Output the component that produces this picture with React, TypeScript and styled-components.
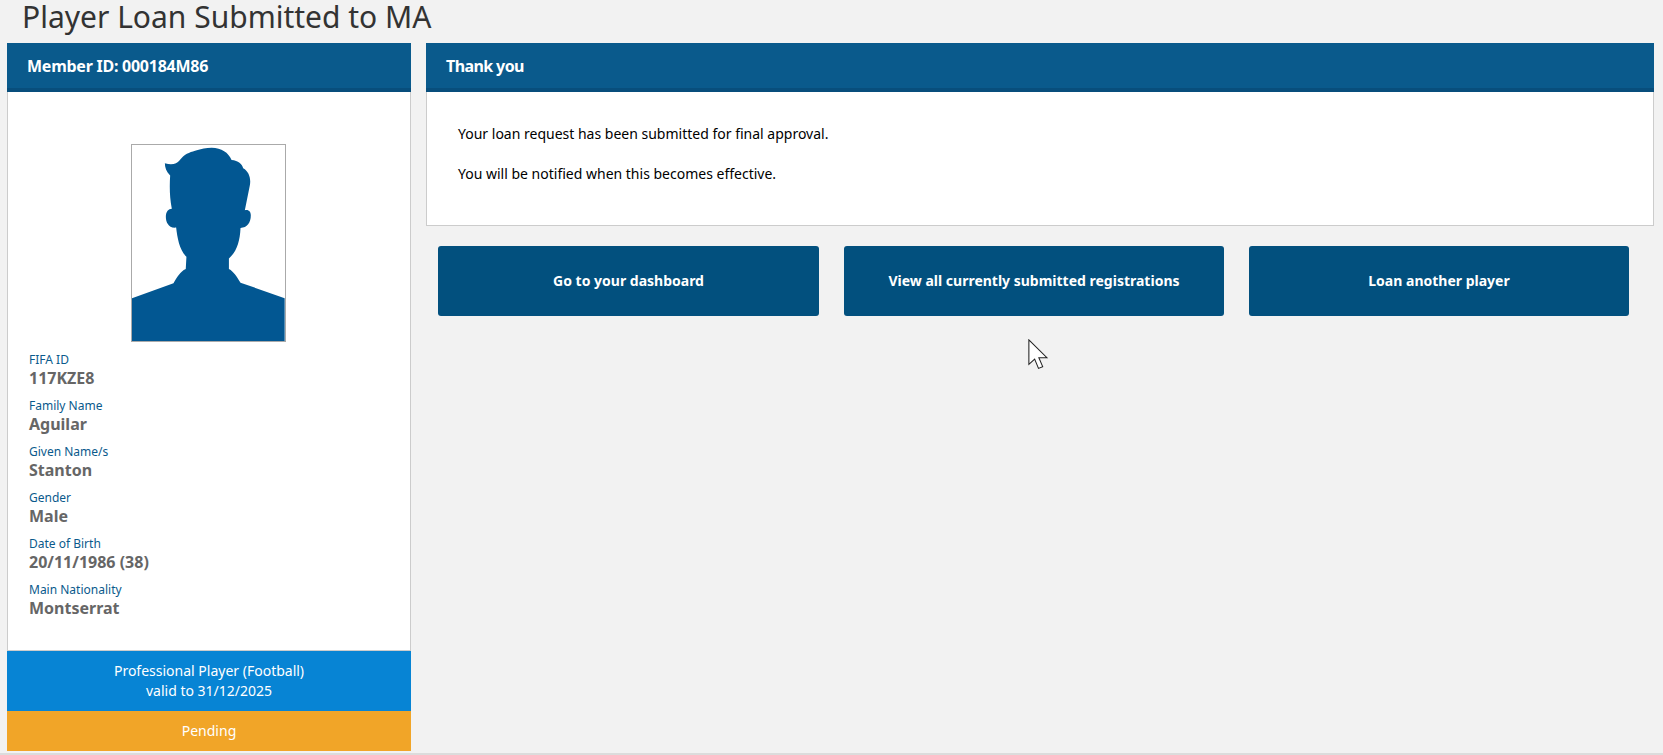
import React from "react";
import styled, { createGlobalStyle } from "styled-components";

const Global = createGlobalStyle`
  html, body { margin: 0; padding: 0; background: #f2f2f2; }
  body { font-family: "Noto Sans", "Open Sans", sans-serif; font-size: 14px; color: #000; overflow: hidden; }
`;

const Page = styled.div`
  position: relative;
  width: 1663px;
  height: 755px;
  box-sizing: border-box;
  border-bottom: 2px solid #dcdcdc;
  overflow: hidden;
`;
const Title = styled.h1`
  margin: 0;
  padding: 0 0 0 22px;
  height: 43px;
  font-size: 30px;
  line-height: 34px;
  font-weight: 400;
  color: #333;
`;
const Columns = styled.div`
  display: grid;
  grid-template-columns: 404px 1228px;
  column-gap: 15px;
  padding-left: 7px;
  align-items: start;
`;
const PanelHeader = styled.div<{ $tracking: number }>`
  box-sizing: border-box;
  height: 49px;
  padding: 0 20px;
  background: #0a5a8c;
  border-bottom: 4px solid #084e7c;
  color: #fff;
  font-size: 16px;
  font-weight: 700;
  line-height: 46px;
  letter-spacing: ${(p) => p.$tracking}px;
`;
const ProfileBody = styled.div`
  box-sizing: border-box;
  height: 559px;
  background: #fff;
  border: 1px solid #ccc;
  border-top: 0;
  padding: 52px 21px 0;
`;
const Photo = styled.div`
  box-sizing: border-box;
  width: 155px;
  height: 198px;
  margin: 0 auto 10px;
  border: 1px solid #aaa;
  line-height: 0;
  transform: translateX(-1px);
`;
const Field = styled.div`
  height: 46px;
`;
const Label = styled.div`
  font-size: 12px;
  line-height: 16px;
  color: #0a5a8c;
`;
const Value = styled.div`
  font-size: 16px;
  font-weight: 700;
  line-height: 21px;
  color: #666;
`;
const TypeBar = styled.div`
  height: 60px;
  box-sizing: border-box;
  padding-top: 10px;
  background: #0784d4;
  color: #fff;
  text-align: center;
  line-height: 20px;
`;
const StatusBar = styled.div`
  height: 40px;
  background: #f1a528;
  color: #fff;
  text-align: center;
  line-height: 40px;
`;
const MessageBody = styled.div`
  box-sizing: border-box;
  height: 134px;
  background: #fff;
  border: 1px solid #ccc;
  border-top: 0;
  padding: 32px 31px 0;
`;
const Message = styled.p`
  margin: 0 0 20px;
  line-height: 20px;
`;
const Actions = styled.div`
  display: grid;
  grid-template-columns: 381px 380px 380px;
  column-gap: 25px;
  margin-top: 20px;
  padding-left: 12px;
`;
const ActionButton = styled.button`
  height: 70px;
  padding: 0 0 2px;
  border: 0;
  border-radius: 3px;
  background: #02507e;
  color: #fff;
  font-family: inherit;
  font-size: 14px;
  font-weight: 700;
`;
const Cursor = styled.svg`
  position: absolute;
  left: 1028px;
  top: 339px;
`;

const fields: [string, string][] = [
  ["FIFA ID", "117KZE8"],
  ["Family Name", "Aguilar"],
  ["Given Name/s", "Stanton"],
  ["Gender", "Male"],
  ["Date of Birth", "20/11/1986 (38)"],
  ["Main Nationality", "Montserrat"],
];

export default function App() {
  return (
    <Page>
      <Global />
      <Title>Player Loan Submitted to MA</Title>
      <Columns>
        <section>
          <PanelHeader $tracking={-0.25}>Member ID: 000184M86</PanelHeader>
          <ProfileBody>
            <Photo>
              <svg width="153" height="196" viewBox="35 28 461 591" preserveAspectRatio="none">
                <path
                  fill="#025792"
                  d="M35 490 L160 445 C172 425 180 410 197 402 L199 365 C178 345 172 310 168 277 C145 280 137 260 137 245 C137 228 145 220 155 220 C148 185 148 150 150 120 C138 108 134 95 134 83 C155 90 170 85 178 75 C192 55 208 50 225 45 C245 40 258 36 275 36 C305 37 325 50 335 73 C355 75 367 85 370 98 C388 108 394 130 390 150 L375 225 C387 222 393 230 393 240 C393 262 382 278 362 278 C360 320 350 350 327 370 L327 402 C342 410 350 425 362 443 L495 490 L495 619 L35 619 Z"
                />
              </svg>
            </Photo>
            {fields.map(([label, value]) => (
              <Field key={label}>
                <Label>{label}</Label>
                <Value>{value}</Value>
              </Field>
            ))}
          </ProfileBody>
          <TypeBar>
            Professional Player (Football)
            <br />
            valid to 31/12/2025
          </TypeBar>
          <StatusBar>Pending</StatusBar>
        </section>
        <section>
          <PanelHeader $tracking={-0.6}>Thank you</PanelHeader>
          <MessageBody>
            <Message>Your loan request has been submitted for final approval.</Message>
            <Message>You will be notified when this becomes effective.</Message>
          </MessageBody>
          <Actions>
            <ActionButton>Go to your dashboard</ActionButton>
            <ActionButton>View all currently submitted registrations</ActionButton>
            <ActionButton>Loan another player</ActionButton>
          </Actions>
        </section>
      </Columns>
      <Cursor width="21" height="31.5" viewBox="0 0 12 18">
        <path d="M0.5 0.5 L0.5 14.5 L3.8 11.5 L6 16.8 L8.4 15.8 L6.2 10.7 L10.8 10.7 Z" fill="#fff" stroke="#222" strokeWidth="0.6" />
      </Cursor>
    </Page>
  );
}
